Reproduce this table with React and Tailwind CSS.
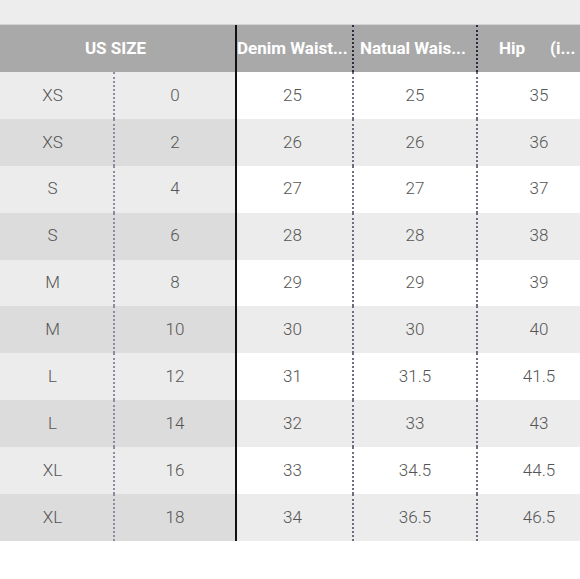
const rows = [
  ['XS', '0', '25', '25', '35'],
  ['XS', '2', '26', '26', '36'],
  ['S', '4', '27', '27', '37'],
  ['S', '6', '28', '28', '38'],
  ['M', '8', '29', '29', '39'],
  ['M', '10', '30', '30', '40'],
  ['L', '12', '31', '31.5', '41.5'],
  ['L', '14', '32', '33', '43'],
  ['XL', '16', '33', '34.5', '44.5'],
  ['XL', '18', '34', '36.5', '46.5'],
];

export default function App() {
  return (
    <div className="w-[580px] h-[579px] overflow-hidden bg-white font-['Roboto',_'Liberation_Sans',_sans-serif]">
      <div className="h-[25px] bg-[#ededee] border-b border-[#d4d4d4]" />
      <div className="w-[620px]">
        {/* header */}
        <div className="flex h-[47px] bg-[#a9a9a9] text-white font-bold text-[17px] items-center">
          <div className="w-[237px] h-full flex items-center justify-center pr-1 border-r-2 border-[#111]">
            US SIZE
          </div>
          <div className="w-[117px] h-full flex items-center whitespace-nowrap border-r-2 border-dotted border-[#2c2c3c]">
            Denim Waist...
          </div>
          <div className="w-[124px] h-full flex items-center justify-center whitespace-nowrap border-r-2 border-dotted border-[#2c2c3c] pr-1">
            Natual Wais...
          </div>
          <div className="w-[122px] h-full flex items-center whitespace-nowrap pl-[21px]">
            <span>Hip</span>
            <span className="ml-[25px]">(i...</span>
          </div>
        </div>
        {/* body */}
        {rows.map((r, i) => (
          <div
            key={i}
            className="flex h-[46.9px] text-[17px] font-light text-[#555]"
          >
            <div className={`w-[115px] flex items-center justify-center pr-2 border-r-2 border-dotted border-[#8d8d9d] ${i % 2 ? 'bg-[#dcdcdc]' : 'bg-[#ececec]'}`}>
              {r[0]}
            </div>
            <div className={`w-[122px] flex items-center justify-center border-r-2 border-[#111] ${i % 2 ? 'bg-[#dcdcdc]' : 'bg-[#ececec]'}`}>
              {r[1]}
            </div>
            <div className={`w-[117px] flex items-center justify-center pr-1 border-r-2 border-dotted border-[#6e6e7e] ${i % 2 ? 'bg-[#ececec]' : 'bg-white'}`}>
              {r[2]}
            </div>
            <div className={`w-[124px] flex items-center justify-center border-r-2 border-dotted border-[#6e6e7e] ${i % 2 ? 'bg-[#ececec]' : 'bg-white'}`}>
              {r[3]}
            </div>
            <div className={`w-[122px] flex items-center justify-center ${i % 2 ? 'bg-[#ececec]' : 'bg-white'}`}>
              {r[4]}
            </div>
          </div>
        ))}
      </div>
    </div>
  );
}
